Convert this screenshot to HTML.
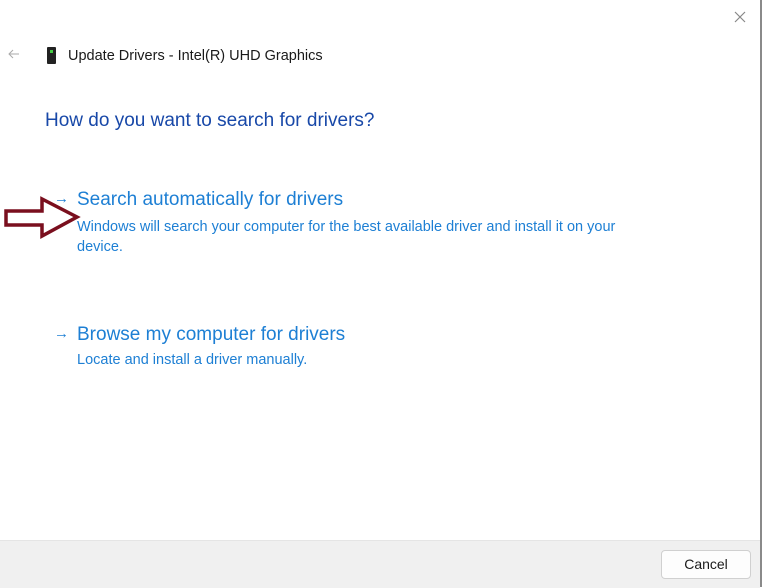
<!DOCTYPE html>
<html><head><style>
body{margin:0;width:764px;height:587px;background:#fff;font-family:"Liberation Sans",sans-serif;position:relative;overflow:hidden}
.t{position:absolute;white-space:nowrap}
</style></head><body>
<div style="position:absolute;left:0;top:540px;width:760px;height:47px;background:#f0f0f0;border-top:1px solid #e5e5e5"></div>
<div style="position:absolute;left:760px;top:0;width:2px;height:587px;background:#8a8a8a"></div>
<div style="position:absolute;left:661px;top:550px;width:88px;height:27px;background:#fdfdfd;border:1px solid #d0d0d0;border-radius:4px;font-size:14px;line-height:27px;text-align:center;color:#1a1a1a">Cancel</div>
<svg style="position:absolute;left:733px;top:10px" width="14" height="14"><path d="M2 2L12 12M12 2L2 12" stroke="#888" stroke-width="1.2"/></svg>
<svg style="position:absolute;left:8px;top:49px" width="12" height="10"><path d="M11 5H1M5 1L1 5L5 9" stroke="#aaa" fill="none" stroke-width="1"/></svg>
<div style="position:absolute;left:47px;top:47px;width:9px;height:17px;background:#222;border-radius:1px"></div>
<div style="position:absolute;left:50px;top:50px;width:3px;height:3px;background:#4c4"></div>
<div class="t" style="left:68px;top:48px;font-size:14.5px;color:#1a1a1a">Update Drivers - Intel(R) UHD Graphics</div>
<div class="t" style="left:45px;top:110px;font-size:19px;color:#1848a8">How do you want to search for drivers?</div>
<div class="t" style="left:54px;top:190px;font-size:15px;color:#1d7fd4">→</div>
<div class="t" style="left:77px;top:189px;font-size:19px;color:#1d7fd4">Search automatically for drivers</div>
<div class="t" style="left:77px;top:217px;font-size:14.5px;line-height:20px;color:#1d7fd4">Windows will search your computer for the best available driver and install it on your<br>device.</div>
<div class="t" style="left:54px;top:325px;font-size:15px;color:#1d7fd4">→</div>
<div class="t" style="left:77px;top:324px;font-size:19px;color:#1d7fd4">Browse my computer for drivers</div>
<div class="t" style="left:77px;top:352px;font-size:14.5px;color:#1d7fd4">Locate and install a driver manually.</div>
<svg style="position:absolute;left:0;top:190px" width="90" height="60"><path d="M6 21H42V9L77 27L42 46V35H6Z" fill="none" stroke="#7a0f1e" stroke-width="3.5" stroke-linejoin="miter"/></svg>
</body></html>
